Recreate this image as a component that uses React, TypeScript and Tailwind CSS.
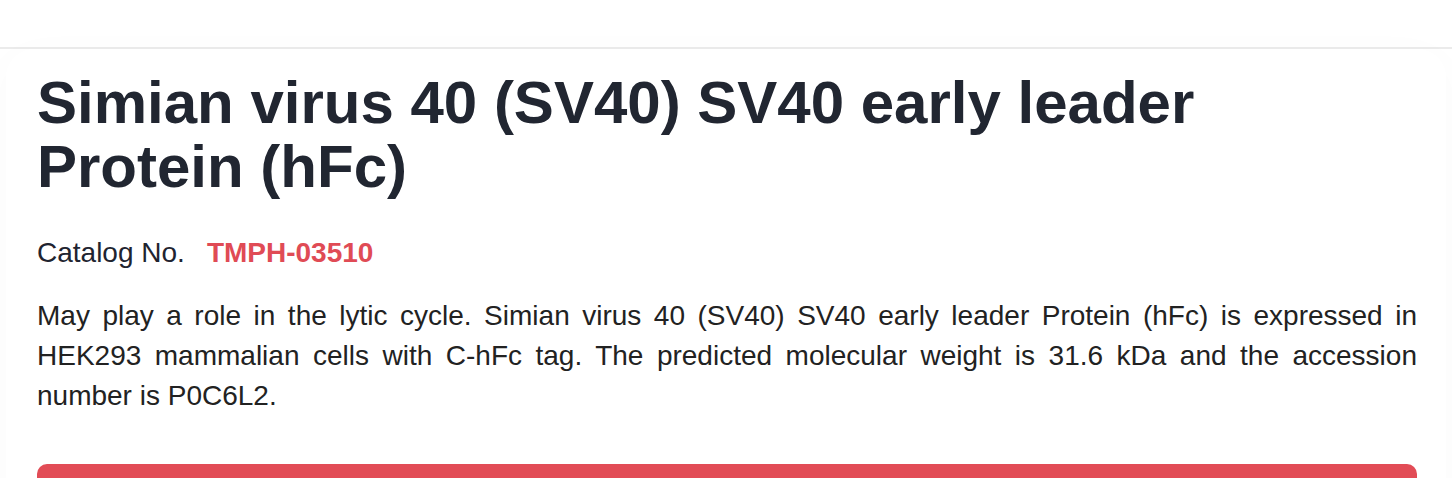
export default function App() {
  return (
    <div className="min-h-[478px] bg-white font-['Liberation_Sans',Arial,sans-serif]">
      {/* top bar */}
      <header className="h-[49px] border-b-2 border-[#ebebeb] bg-white" />

      {/* product panel */}
      <main className="mx-[6px] rounded-[28px] bg-white pl-[31px] pr-[29px] pt-[22px] pb-8 shadow-[0_10px_48px_rgba(0,0,0,0.025)]">
        <h1 className="text-[60px] font-bold leading-[64px] text-[#212631]">
          Simian virus 40 (SV40) SV40 early leader
          <br />
          Protein (hFc)
        </h1>

        <div className="mt-[34px] flex items-center text-[28px] leading-[40px] text-[#1f2430]">
          <span>Catalog No.</span>
          <span className="ml-[22px] font-bold text-[#e04b55]">TMPH-03510</span>
        </div>

        <p className="mt-[23px] text-justify text-[28px] leading-[40px] text-[#222]">
          May play a role in the lytic cycle. Simian virus 40 (SV40) SV40 early leader Protein (hFc) is
          expressed in HEK293 mammalian cells with C-hFc tag. The predicted molecular weight is 31.6 kDa
          and the accession number is P0C6L2.
        </p>

        <button className="mt-[48px] block h-14 w-full rounded-[10px] bg-[#e24c56]" />
      </main>
    </div>
  );
}
